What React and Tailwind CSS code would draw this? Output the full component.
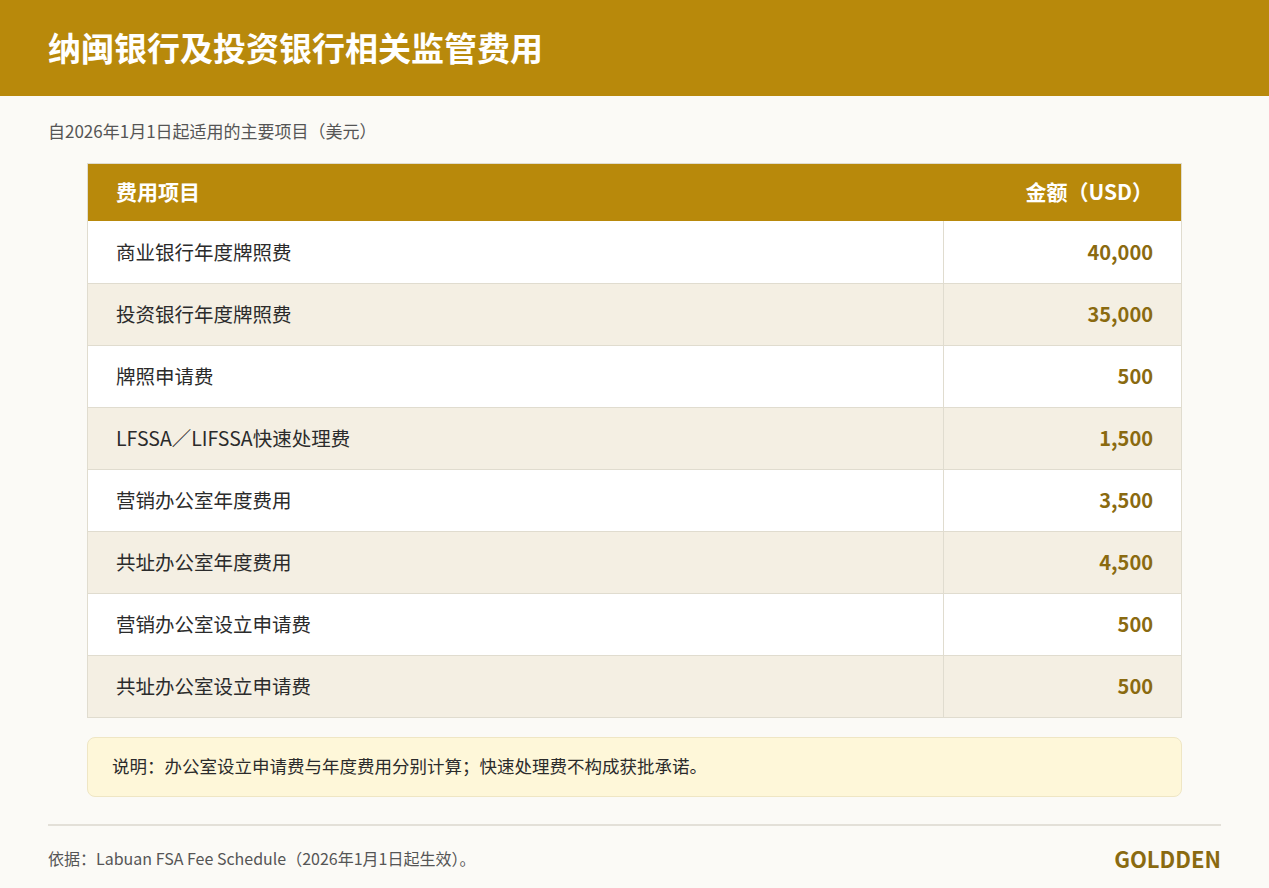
const rows = [
  ['商业银行年度牌照费', '40,000'],
  ['投资银行年度牌照费', '35,000'],
  ['牌照申请费', '500'],
  ['LFSSA／LIFSSA快速处理费', '1,500'],
  ['营销办公室年度费用', '3,500'],
  ['共址办公室年度费用', '4,500'],
  ['营销办公室设立申请费', '500'],
  ['共址办公室设立申请费', '500'],
];

export default function App() {
  return (
    <div className="w-[1269px] h-[888px] bg-[#fbfaf6] text-[#2b2b2b] overflow-hidden" style={{ fontFamily: '"Noto Sans CJK SC", "Noto Sans", sans-serif' }}>
      <div className="h-[96px] bg-[#b8890b] flex items-center px-12">
        <h1 className="text-[33px] font-bold text-white">纳闽银行及投资银行相关监管费用</h1>
      </div>
      <p className="px-12 mt-[22px] text-[17px] text-[#555]">自2026年1月1日起适用的主要项目（美元）</p>
      <div className="mx-[87px] mt-[19px] border border-[#e0dccf]">
        <div className="h-[57px] bg-[#b8890b] flex items-center text-white font-bold text-[21px]">
          <div className="flex-1 pl-7">费用项目</div>
          <div className="w-[238px] pr-7 text-right">金额（USD）</div>
        </div>
        {rows.map(([name, amt], i) => (
          <div key={i} className={`h-[62px] flex items-stretch text-[19.5px] ${i > 0 ? 'border-t border-[#e0dccf]' : ''} ${i % 2 ? 'bg-[#f4efe3]' : 'bg-white'}`}>
            <div className="flex-1 pl-7 flex items-center">{name}</div>
            <div className="w-[238px] pr-7 flex items-center justify-end border-l border-[#e0dccf] font-bold text-[#8a6a10] text-[20px]">{amt}</div>
          </div>
        ))}
      </div>
      <div className="mx-[87px] mt-[19px] h-[60px] bg-[#fef7d9] border border-[#efe6c4] rounded-lg flex items-center px-6 text-[17.5px]">
        说明：办公室设立申请费与年度费用分别计算；快速处理费不构成获批承诺。
      </div>
      <div className="mx-12 mt-[27px] border-t-2 border-[#e3e0d8]" />
      <div className="mx-12 mt-[16px] flex items-center justify-between">
        <span className="text-[16px] text-[#555]">依据：Labuan FSA Fee Schedule（2026年1月1日起生效）。</span>
        <span className="text-[22px] font-bold text-[#8a6a10]">GOLDDEN</span>
      </div>
    </div>
  );
}
